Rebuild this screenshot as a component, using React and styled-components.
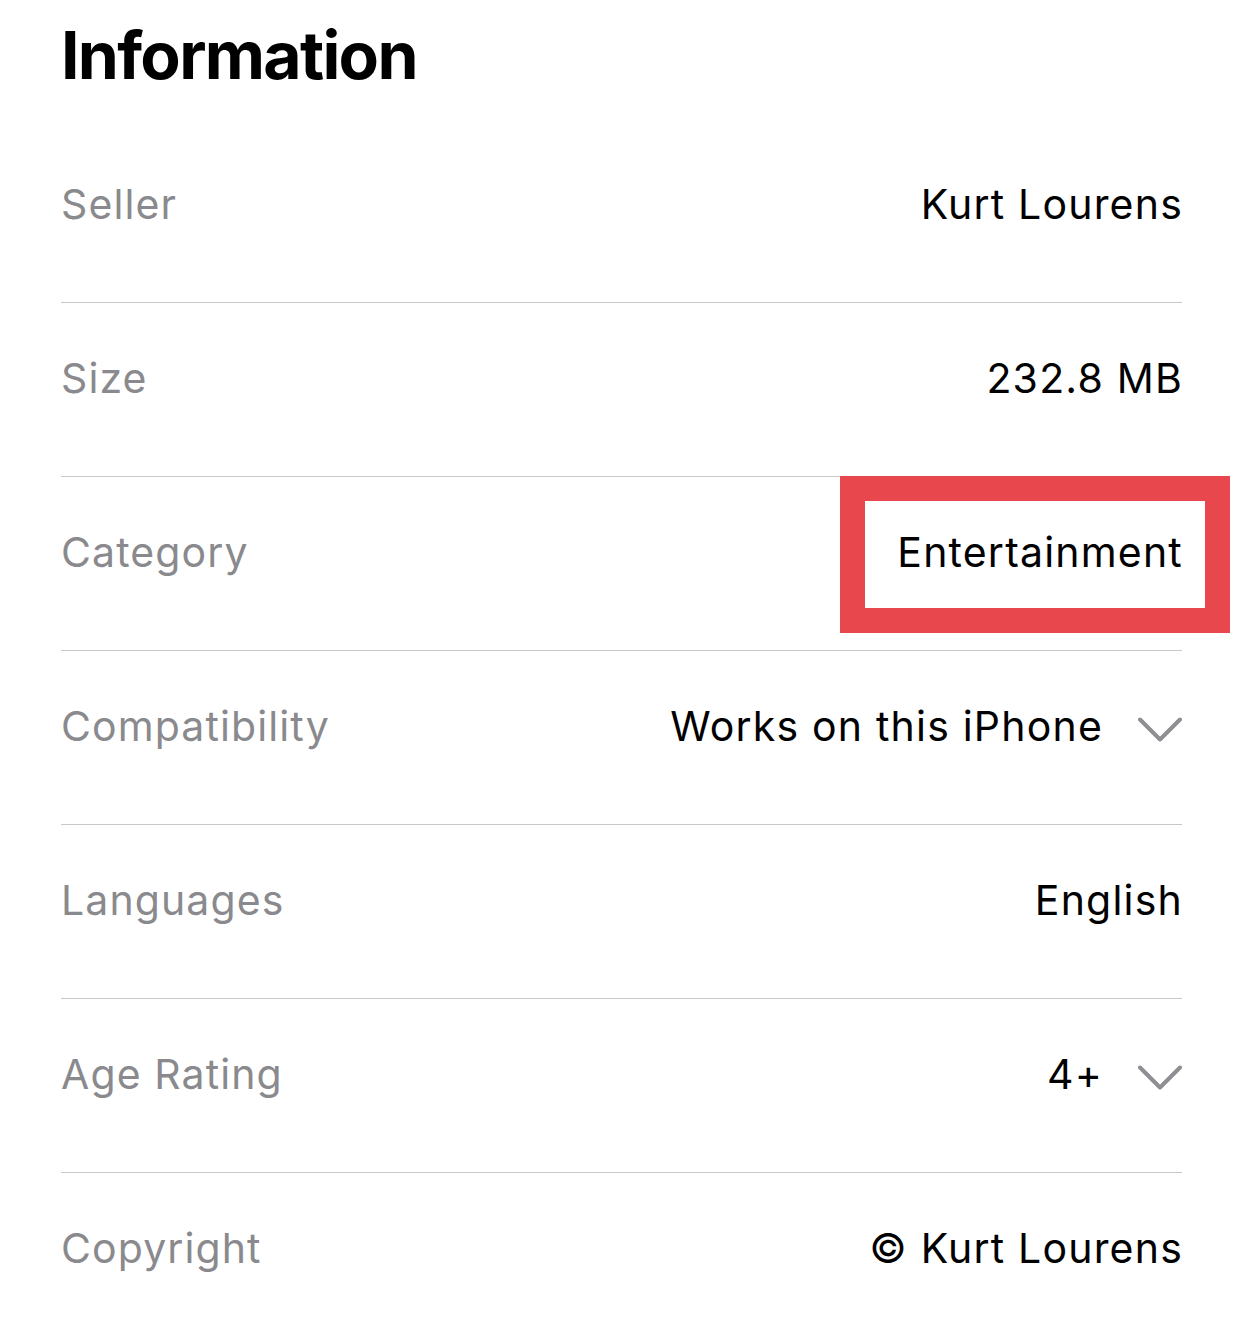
import React from "react";
import styled, { createGlobalStyle } from "styled-components";

const Global = createGlobalStyle`
  html, body { margin: 0; padding: 0; background: #fff; }
  body { font-family: Inter, "Noto Sans", sans-serif; -webkit-font-smoothing: antialiased; }
`;

const Page = styled.main`
  padding: 22px 60px 0 61px;
  width: 1242px;
  box-sizing: border-box;
  overflow: hidden;
`;

const Title = styled.h1`
  margin: 0;
  font-size: 66px;
  line-height: 66px;
  font-weight: 700;
  letter-spacing: -1.7px;
  color: #000;
`;

const List = styled.dl`
  margin: 41px 0 0;
  padding: 0;
`;

const Row = styled.div`
  display: flex;
  align-items: center;
  justify-content: space-between;
  padding: 50px 0 73px;
  border-bottom: ${(p) => (p.$last ? "none" : "1px solid #c8c8cc")};
`;

const Label = styled.dt`
  margin: 0;
  font-size: 41px;
  line-height: 50px;
  letter-spacing: 1.1px;
  color: #8a8a8e;
`;

const Value = styled.dd`
  margin: 0;
  display: flex;
  align-items: center;
  gap: 36px;
  font-size: 41px;
  line-height: 50px;
  letter-spacing: 1.2px;
  color: #000;
`;

const ValueText = styled.span`
  position: relative;
  margin-right: -1px;
`;

const Highlight = styled.span`
  position: absolute;
  top: -51px;
  bottom: -56px;
  right: -47px;
  width: 390px;
  box-sizing: border-box;
  border: 25px solid #e8474d;
  pointer-events: none;
`;

const ChevronIcon = styled.svg`
  flex: none;
  margin-top: 6px;
`;

const Chevron = () => (
  <ChevronIcon width="44" height="25" viewBox="0 0 44 25" aria-hidden="true">
    <polyline
      points="2,2.5 22,22.5 42,2.5"
      fill="none"
      stroke="#8e8e93"
      strokeWidth="4"
      strokeLinecap="round"
      strokeLinejoin="round"
    />
  </ChevronIcon>
);

const rows = [
  { label: "Seller", value: "Kurt Lourens" },
  { label: "Size", value: "232.8 MB" },
  { label: "Category", value: "Entertainment", highlight: true },
  { label: "Compatibility", value: "Works on this iPhone", chevron: true },
  { label: "Languages", value: "English" },
  { label: "Age Rating", value: "4+", chevron: true },
  { label: "Copyright", value: "© Kurt Lourens" },
];

export default function App() {
  return (
    <>
      <Global />
      <Page>
        <Title>Information</Title>
        <List>
          {rows.map((r, i) => (
            <Row key={r.label} $last={i === rows.length - 1}>
              <Label>{r.label}</Label>
              <Value>
                <ValueText>
                  {r.value}
                  {r.highlight && <Highlight />}
                </ValueText>
                {r.chevron && <Chevron />}
              </Value>
            </Row>
          ))}
        </List>
      </Page>
    </>
  );
}
